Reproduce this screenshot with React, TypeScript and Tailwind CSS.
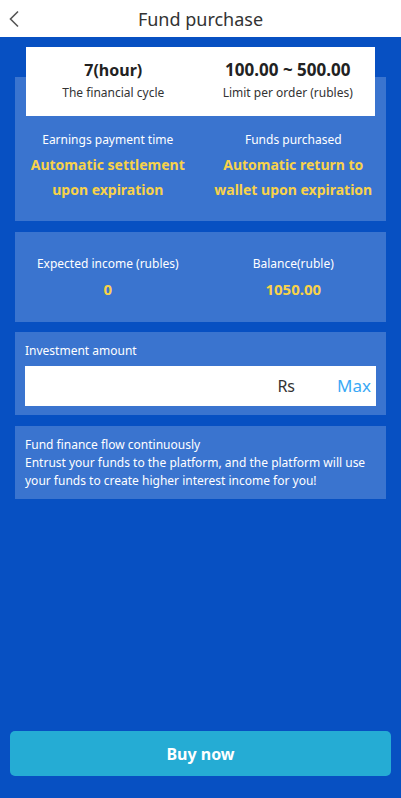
import React from "react";

const font = { fontFamily: '"Noto Sans", "Open Sans", sans-serif' };

function Stat({ label, value }: { label: string; value: string }) {
  return (
    <div className="flex flex-1 flex-col items-center">
      <span className="text-[12px] leading-[18px] text-white">{label}</span>
      <span className="mt-[7px] text-[15px] font-bold leading-[18px] text-[#f8d24a]">{value}</span>
    </div>
  );
}

export default function App() {
  return (
    <div className="flex h-[798px] w-full flex-col bg-[#0750c2]" style={font}>
      {/* top bar */}
      <header className="relative flex h-[37px] shrink-0 items-center justify-center bg-white">
        <svg className="absolute left-[8px] top-[10px]" width="12" height="18" viewBox="0 0 12 18" fill="none">
          <path d="M10 1.5 2.5 9l7.5 7.5" stroke="#555" strokeWidth="1.6" />
        </svg>
        <h1 className="text-[18px] leading-none text-[#333]">Fund purchase</h1>
      </header>

      <main className="flex flex-1 flex-col px-[15px]">
        {/* cycle / limit card overlapping the first panel */}
        <div className="relative z-10 mx-[11px] mt-[10px] flex h-[69px] bg-white">
          <div className="flex flex-1 flex-col items-center pt-[13px]">
            <span className="text-[16px] font-bold leading-[20px] text-[#222]">7(hour)</span>
            <span className="mt-[5px] text-[12px] leading-[16px] text-[#333]">The financial cycle</span>
          </div>
          <div className="flex flex-1 flex-col items-center pt-[13px]">
            <span className="text-[17px] font-bold leading-[20px] text-[#222]">100.00 ~ 500.00</span>
            <span className="mt-[5px] text-[12px] leading-[16px] text-[#333]">Limit per order (rubles)</span>
          </div>
        </div>

        <section className="-mt-[39px] flex bg-[#3a74cf] pb-[19px] pt-[54px]">
          <div className="flex flex-1 flex-col items-center">
            <span className="text-[12px] leading-[18px] text-white">Earnings payment time</span>
            <span className="mt-[3px] text-center text-[14px] font-bold leading-[25px] text-[#f8d24a]">
              Automatic settlement
              <br />
              upon expiration
            </span>
          </div>
          <div className="flex flex-1 flex-col items-center">
            <span className="text-[12px] leading-[18px] text-white">Funds purchased</span>
            <span className="mt-[3px] text-center text-[14px] font-bold leading-[25px] text-[#f8d24a]">
              Automatic return to
              <br />
              wallet upon expiration
            </span>
          </div>
        </section>

        <section className="mt-[11px] flex h-[90px] items-center bg-[#3a74cf] pb-[2px]">
          <Stat label="Expected income (rubles)" value="0" />
          <Stat label="Balance(ruble)" value="1050.00" />
        </section>

        <section className="mt-[10px] bg-[#3a74cf] px-[10px] pb-[9px] pt-[10px]">
          <div className="text-[12px] leading-[18px] text-white">Investment amount</div>
          <div className="mt-[6px] flex h-[40px] items-center bg-white">
            <input className="min-w-0 flex-1 bg-transparent px-2 text-[15px] outline-none" />
            <span className="text-[16px] text-[#333]">Rs</span>
            <button className="ml-[42px] mr-[5px] text-[17px] text-[#3aa9f5]">Max</button>
          </div>
        </section>

        <section className="mt-[11px] bg-[#3a74cf] px-[10px] pb-[9px] pt-[10px] text-[12px] leading-[18px] text-white">
          <p>Fund finance flow continuously</p>
          <p>
            Entrust your funds to the platform, and the platform will use your funds to create higher
            interest income for you!
          </p>
        </section>

        <div className="flex-1" />
      </main>

      <div className="px-[10px] pb-[22px]">
        <button className="h-[45px] w-full rounded-[5px] bg-[#25acd4] text-[16px] font-bold text-white">
          Buy now
        </button>
      </div>
    </div>
  );
}
